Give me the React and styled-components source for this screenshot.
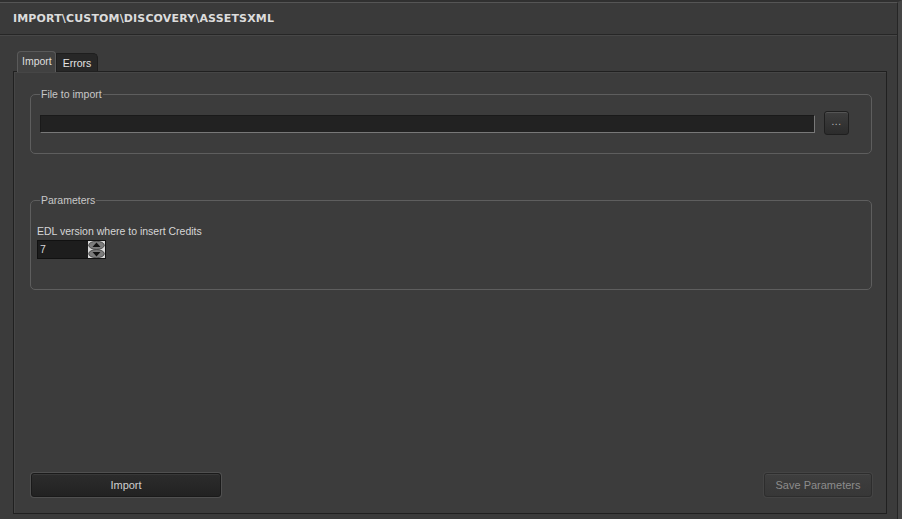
import React from 'react';
import styled, { createGlobalStyle } from 'styled-components';

const GlobalStyle = createGlobalStyle`
  html, body {
    margin: 0;
    padding: 0;
    background: #3b3b3b;
  }
  * {
    box-sizing: border-box;
  }
`;

const Window = styled.div`
  width: 902px;
  height: 519px;
  display: flex;
  flex-direction: column;
  background: #3b3b3b;
  border-top: 2px solid #303030;
  border-right: 4px solid #454545;
  font-family: "Liberation Sans", Arial, sans-serif;
  font-size: 10.5px;
  color: #d2d2d2;
  overflow: hidden;
`;

const TitleBar = styled.div`
  height: 33px;
  display: flex;
  align-items: center;
  padding-left: 13px;
  border-top: 1px solid #555;
  border-bottom: 1px solid #262626;
  border-right: 1px solid #252525;
  box-shadow: 0 1px 0 #474747;
  background: #3a3a3a;
`;

const Title = styled.h1`
  margin: 0;
  font-family: "DejaVu Sans", "Liberation Sans", sans-serif;
  font-weight: bold;
  font-size: 11px;
  letter-spacing: 0.15px;
  color: #dcdcdc;
`;

const Body = styled.div`
  flex: 1;
  display: flex;
  flex-direction: column;
  padding: 15px 10px 5px 13px;
  border-right: 1px solid #252525;
`;

const TabBar = styled.div`
  display: flex;
  align-items: flex-end;
  padding-left: 4px;
  height: 21px;
`;

const Tab = styled.div`
  height: ${p => (p.$active ? '21px' : '18px')};
  padding: ${p => (p.$active ? '3px 3px 0 4px' : '3px 6px 0 6px')};
  background: ${p => (p.$active ? '#414141' : '#272727')};
  color: ${p => (p.$active ? '#dedede' : '#e4e4e4')};
  border: 1px solid ${p => (p.$active ? '#5a5a5a' : '#1e1e1e')};
  border-bottom: none;
  border-radius: ${p => (p.$active ? '4px 4px 0 0' : '0 5px 0 0')};
  margin-bottom: ${p => (p.$active ? '-1px' : '0')};
  position: relative;
  z-index: ${p => (p.$active ? 1 : 0)};
  font-size: 10.5px;
`;

const Panel = styled.div`
  flex: 1;
  display: flex;
  flex-direction: column;
  border: 1px solid #202020;
  box-shadow: inset 1px 1px 0 #464646;
  background: #3c3c3c;
  padding: 16px 14px 16px 16px;
`;

const Group = styled.fieldset`
  margin: 0;
  margin-top: ${p => p.$top || 0}px;
  padding: 0 9px ${p => p.$bottom || 0}px 9px;
  border: 1px solid #5e5e5e;
  border-radius: 5px;
  min-width: 0;
`;

const Legend = styled.legend`
  padding: 0 1px;
  margin-left: 0;
  color: #c8c8c8;
  font-size: 10.5px;
  line-height: 12px;
`;

const Row = styled.div`
  height: 48px;
  display: flex;
  align-items: center;
`;

const PathInput = styled.div`
  flex: 1;
  height: 18px;
  background: #222;
  border: 1px solid;
  border-color: #1a1a1a #787878 #787878 #1a1a1a;
`;

const DotsButton = styled.button`
  width: 25px;
  height: 24px;
  margin: -2px 13px 0 9px;
  padding: 0 0 4px 0;
  border: 1px solid #1f1f1f;
  border-radius: 3px;
  background: linear-gradient(#3e3e3e, #2c2c2c);
  box-shadow: inset 0 1px 0 #555;
  color: #bbb;
  font-family: "Liberation Sans", Arial, sans-serif;
  font-size: 10px;
  letter-spacing: 0.5px;
`;

const Column = styled.div`
  height: 83px;
  display: flex;
  flex-direction: column;
  align-items: flex-start;
`;

const FieldLabel = styled.div`
  margin-top: 19px;
  margin-left: -3px;
  color: #d6d6d6;
  font-size: 10.5px;
  line-height: 12px;
`;

const Spin = styled.div`
  margin-top: 3px;
  margin-left: -3px;
  width: 69px;
  height: 19px;
  display: flex;
  border: 1px solid #111;
  background: #1d1d1d;
`;

const SpinValue = styled.div`
  flex: 1;
  padding-left: 2px;
  line-height: 17px;
  color: #d8d8d8;
  font-size: 10.5px;
`;

const Spacer = styled.div`
  flex: 1;
`;

const Actions = styled.div`
  display: flex;
  justify-content: space-between;
  padding-left: 1px;
`;

const Button = styled.button`
  width: ${p => p.$width}px;
  height: 24px;
  border-radius: 3px;
  border: 1px solid ${p => (p.$disabled ? '#2d2d2d' : '#1a1a1a')};
  background: ${p => (p.$disabled ? 'linear-gradient(#3e3e3e, #373737)' : 'linear-gradient(#2c2c2c, #222)')};
  box-shadow: 0 0 0 1px ${p => (p.$disabled ? '#444' : '#505050')}, inset 0 1px 0 ${p => (p.$disabled ? '#474747' : '#383838')};
  color: ${p => (p.$disabled ? '#8c8c8c' : '#cfcfcf')};
  font-family: "Liberation Sans", Arial, sans-serif;
  font-size: 11px;
  padding: 0;
`;

const SpinArrows = () => (
  <svg width="17" height="17" viewBox="0 0 17 17">
    <rect x="0" y="0" width="17" height="17" fill="#d8d8d8" />
    <ellipse cx="8.5" cy="4.3" rx="7.8" ry="4.1" fill="#7c7c7c" stroke="#3a3a3a" strokeWidth="0.8" />
    <ellipse cx="8.5" cy="12.7" rx="7.8" ry="4.1" fill="#7c7c7c" stroke="#3a3a3a" strokeWidth="0.8" />
    <polygon points="8.5,1.6 12.5,6 4.5,6" fill="#111" />
    <polygon points="4.5,11 12.5,11 8.5,15.4" fill="#111" />
  </svg>
);

export default function App() {
  return (
    <>
      <GlobalStyle />
      <Window>
        <TitleBar>
          <Title>IMPORT\CUSTOM\DISCOVERY\ASSETSXML</Title>
        </TitleBar>
        <Body>
          <TabBar>
            <Tab $active>Import</Tab>
            <Tab>Errors</Tab>
          </TabBar>
          <Panel>
            <Group $bottom={5}>
              <Legend>File to import</Legend>
              <Row>
                <PathInput />
                <DotsButton>...</DotsButton>
              </Row>
            </Group>
            <Group $top={40}>
              <Legend>Parameters</Legend>
              <Column>
                <FieldLabel>EDL version where to insert Credits</FieldLabel>
                <Spin>
                  <SpinValue>7</SpinValue>
                  <SpinArrows />
                </Spin>
              </Column>
            </Group>
            <Spacer />
            <Actions>
              <Button $width={190}>Import</Button>
              <Button $width={108} $disabled>Save Parameters</Button>
            </Actions>
          </Panel>
        </Body>
      </Window>
    </>
  );
}
